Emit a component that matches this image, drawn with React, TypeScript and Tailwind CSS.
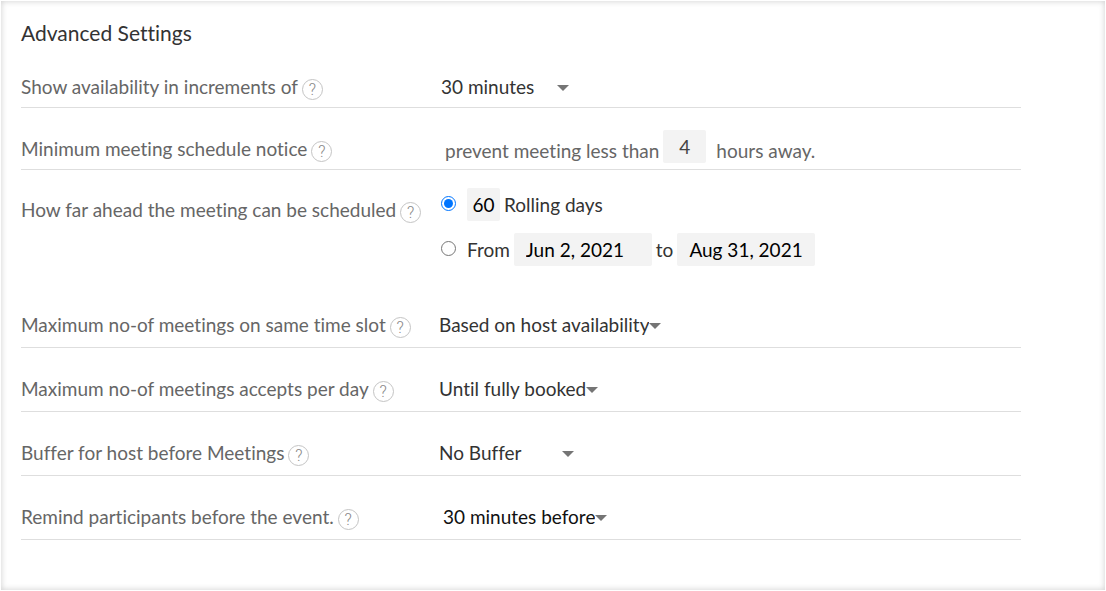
import { useState } from "react";
import type { ReactNode } from "react";
import clsx from "clsx";

type RowProps = {
  label: string;
  htmlFor?: string;
  className?: string;
  labelClassName?: string;
  children: ReactNode;
};

type SelectProps = {
  id: string;
  options: string[];
  className?: string;
};

const HelpButton = ({ topic }: { topic: string }) => (
  <button
    type="button"
    aria-label={`Help: ${topic}`}
    className="mt-1 flex size-[21px] shrink-0 items-center justify-center rounded-full border border-[#c4c4c4] font-['Roboto',sans-serif] text-base leading-none font-light text-[#888]">
    ?
  </button>
);

const Row = ({
  label,
  htmlFor,
  className,
  labelClassName = "-mb-px",
  children,
}: RowProps) => (
  <div className={clsx("flex", className)}>
    <div className={clsx("flex w-[418px] shrink-0 gap-1", labelClassName)}>
      <label htmlFor={htmlFor} className="whitespace-nowrap text-[#666]">
        {label}
      </label>
      <HelpButton topic={label} />
    </div>
    {children}
  </div>
);

const Select = ({ id, options, className }: SelectProps) => (
  <span className="relative flex">
    <select
      id={id}
      className={clsx(
        "cursor-pointer appearance-none bg-transparent pr-3 outline-none [field-sizing:content]",
        className
      )}>
      {options.map((option) => (
        <option key={option}>{option}</option>
      ))}
    </select>
    <svg
      viewBox="0 0 12 6"
      className="pointer-events-none absolute top-2.5 right-0 h-1.5 w-3 fill-[#757575]">
      <path d="M0 0h12L6 6z" />
    </svg>
  </span>
);

const inputStyle = "h-[33px] rounded-xs bg-[#f3f3f3] outline-none";
const ruled = "items-end border-b border-[#dedede]";

function App() {
  const [range, setRange] = useState("rolling");

  return (
    <main className="min-h-screen p-px font-['Lato',sans-serif] text-[19px] leading-6 text-[#333] [font-variant-ligatures:none]">
      <section className="min-h-[589px] bg-white px-5 pt-5 pb-12 shadow-[inset_0_0_6px_rgba(0,0,0,0.2)]">
        <h1 className="pb-px text-[21px]">Advanced Settings</h1>
        <form className="max-w-[1000px]">
          <Row
            label="Show availability in increments of"
            htmlFor="increments"
            className={clsx("h-[62px] pb-2", ruled)}>
            <Select
              id="increments"
              options={["30 minutes", "15 minutes", "60 minutes"]}
              className="w-[130px] pl-0.5"
            />
          </Row>
          <Row
            label="Minimum meeting schedule notice"
            htmlFor="notice"
            className={clsx("h-[62px] pb-1.5", ruled)}
            labelClassName="pb-px">
            <div className="flex items-end pl-1.5 text-[#666]">
              <span>prevent meeting less than</span>
              <input
                id="notice"
                type="text"
                defaultValue="4"
                className={clsx(
                  inputStyle,
                  "mr-2.5 ml-1 w-[43px] text-center text-[#444]"
                )}
              />
              <span>hours away.</span>
            </div>
          </Row>
          <Row
            label="How far ahead the meeting can be scheduled"
            className="h-[114px] items-start pt-[18px]"
            labelClassName="pt-2.5">
            <div className="flex flex-col gap-3">
              <div className="flex items-center">
                <input
                  type="radio"
                  name="range"
                  id="rolling"
                  checked={range === "rolling"}
                  onChange={() => setRange("rolling")}
                  className="mr-[11px] mb-0.5 ml-0.5 size-[15px]"
                />
                <input
                  type="text"
                  aria-label="Number of rolling days"
                  defaultValue="60"
                  className={clsx(
                    inputStyle,
                    "mr-1 w-[33px] text-center text-black"
                  )}
                />
                <label htmlFor="rolling">Rolling days</label>
              </div>
              <div className="flex items-center">
                <input
                  type="radio"
                  name="range"
                  id="between"
                  checked={range === "between"}
                  onChange={() => setRange("between")}
                  className="mr-[11px] mb-0.5 ml-0.5 size-[15px]"
                />
                <label htmlFor="between">From</label>
                <input
                  type="text"
                  aria-label="Start date"
                  defaultValue="Jun 2, 2021"
                  className={clsx(inputStyle, "mx-1 w-[138px] pl-3 text-black")}
                />
                <label htmlFor="end-date">to</label>
                <input
                  id="end-date"
                  type="text"
                  defaultValue="Aug 31, 2021"
                  className={clsx(inputStyle, "mx-1 w-[138px] pl-3 text-black")}
                />
              </div>
            </div>
          </Row>
          <Row
            label="Maximum no-of meetings on same time slot"
            htmlFor="per-slot"
            className={clsx("h-16 pb-2.5", ruled)}>
            <Select
              id="per-slot"
              options={["Based on host availability", "Only one"]}
            />
          </Row>
          <Row
            label="Maximum no-of meetings accepts per day"
            htmlFor="per-day"
            className={clsx("h-16 pb-2.5", ruled)}>
            <Select id="per-day" options={["Until fully booked", "5", "10"]} />
          </Row>
          <Row
            label="Buffer for host before Meetings"
            htmlFor="buffer"
            className={clsx("h-16 pb-2.5", ruled)}>
            <Select
              id="buffer"
              options={["No Buffer", "15 minutes", "30 minutes"]}
              className="w-[135px]"
            />
          </Row>
          <Row
            label="Remind participants before the event."
            htmlFor="reminder"
            className={clsx("h-16 pb-2.5", ruled)}>
            <Select
              id="reminder"
              options={["30 minutes before", "1 hour before"]}
              className="pl-1 text-[#111]"
            />
          </Row>
        </form>
      </section>
    </main>
  );
}

export default App;
